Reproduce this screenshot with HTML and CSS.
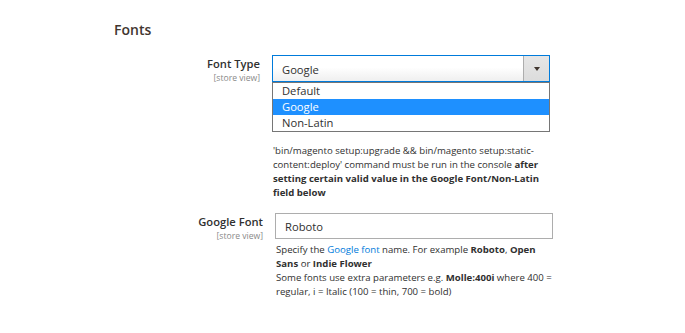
FILE: index.html
```html
<!DOCTYPE html>
<html lang="en">
<head>
<meta charset="utf-8">
<title>Fonts</title>
<link rel="stylesheet" href="styles.css">
</head>
<body>
<div class="page">
  <h2 class="legend">Fonts</h2>

  <div class="field">
    <div class="label">
      <span class="label-text">Font Type</span>
      <span class="scope">[store view]</span>
    </div>
    <div class="control">
      <div class="select">
        <span class="select-value">Google</span>
        <span class="select-button"><span class="caret"></span></span>
        <ul class="options">
          <li class="option">Default</li>
          <li class="option option-selected">Google</li>
          <li class="option">Non-Latin</li>
        </ul>
      </div>
      <p class="note note-first">'bin/magento setup:upgrade &amp;&amp; bin/magento setup:static-content:deploy' command must be run in the console <b>after setting certain valid value in the Google Font/Non-Latin field below</b></p>
    </div>
  </div>

  <div class="field field-second">
    <div class="label">
      <span class="label-text">Google Font</span>
      <span class="scope">[store view]</span>
    </div>
    <div class="control">
      <div class="input">Roboto</div>
      <p class="note note-second">Specify the <a class="link" href="#">Google font</a> name. For example <b>Roboto</b>, <b>Open Sans</b> or <b>Indie Flower</b><br>Some fonts use extra parameters e.g. <b>Molle:400i</b> where 400 = regular, i = Italic (100 = thin, 700 = bold)</p>
    </div>
  </div>
</div>
</body>
</html>
```

FILE: styles.css
```css
* {
  box-sizing: border-box;
}

html, body {
  margin: 0;
  padding: 0;
  background: #ffffff;
}

body {
  font-family: "Open Sans", "Liberation Sans", sans-serif;
  color: #303030;
}

.page {
  padding-top: 20px;
  width: 685px;
  height: 333px;
  overflow: hidden;
}

.legend {
  margin: 0 0 16px 114px;
  font-size: 14px;
  line-height: 19px;
  font-weight: 600;
  color: #41362f;
}

.field {
  display: grid;
  grid-template-columns: 146px 278px;
  column-gap: 12px;
  padding-left: 114px;
}

.field-second {
  padding-left: 117px;
  margin-top: 13px;
}

.label {
  display: flex;
  flex-direction: column;
  align-items: flex-end;
  padding-top: 1px;
  text-align: right;
}

.label-text {
  font-size: 11.2px;
  line-height: 16px;
  font-weight: 600;
  color: #303030;
}

.scope {
  font-size: 8.6px;
  line-height: 12px;
  color: #8a8a8a;
}

.control {
  display: flex;
  flex-direction: column;
}

.select {
  position: relative;
  display: flex;
  align-items: center;
  height: 27px;
  border: 1px solid #007bdb;
  background: linear-gradient(to bottom, #ffffff 45%, #efefef 100%);
  font-size: 11.2px;
  color: #303030;
}

.select-value {
  flex: 1;
  padding-left: 9px;
  padding-top: 1px;
}

.select-button {
  display: flex;
  align-items: center;
  justify-content: center;
  width: 26px;
  align-self: stretch;
  background: linear-gradient(to bottom, #e6e6e6, #dcdcdc);
  border-left: 1px solid #adadad;
}

.caret {
  width: 0;
  height: 0;
  border-left: 3.5px solid transparent;
  border-right: 3.5px solid transparent;
  border-top: 4px solid #41362f;
}

.options {
  position: absolute;
  left: -1px;
  right: -1px;
  top: 26px;
  margin: 0;
  padding: 0;
  list-style: none;
  background: #ffffff;
  border: 1px solid #767676;
  z-index: 2;
}

.option {
  height: 16px;
  line-height: 16px;
  padding-left: 9px;
  font-size: 11.2px;
  color: #303030;
}

.option-selected {
  background: #1e90ff;
  color: #ffffff;
}

.note {
  margin: 0;
  font-size: 9.6px;
  line-height: 14px;
  color: #303030;
  padding-left: 1px;
}

.note b {
  font-weight: 700;
}

.note-first {
  margin-top: 62px;
}

.note-second {
  margin-top: 4px;
}

.link {
  color: #007bdb;
  text-decoration: none;
}

.input {
  height: 26px;
  border: 1px solid #adadad;
  padding-left: 9px;
  display: flex;
  align-items: center;
  font-size: 11.2px;
  color: #303030;
}
```
